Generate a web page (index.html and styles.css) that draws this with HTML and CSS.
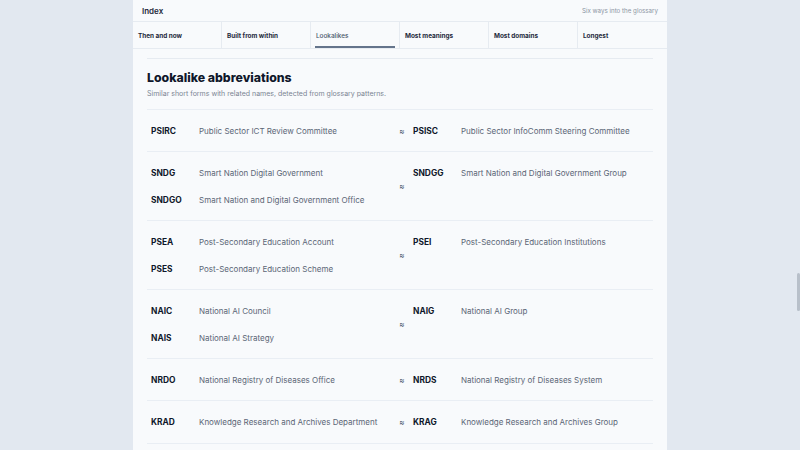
FILE: index.html
```html
<!DOCTYPE html>
<html lang="en">
<head>
<meta charset="utf-8">
<title>Index</title>
<link rel="stylesheet" href="styles.css">
</head>
<body>
<div class="page">
  <header class="top">
    <span class="top-title">Index</span>
    <span class="top-note">Six ways into the glossary</span>
  </header>
  <nav class="tabs">
    <div class="tab">Then and now</div>
    <div class="tab">Built from within</div>
    <div class="tab active">Lookalikes</div>
    <div class="tab">Most meanings</div>
    <div class="tab">Most domains</div>
    <div class="tab">Longest</div>
  </nav>
  <main class="content">
    <section class="section">
      <h1 class="title">Lookalike abbreviations</h1>
      <p class="sub">Similar short forms with related names, detected from glossary patterns.</p>
      <div class="rows">
        <div class="row">
          <div class="group">
            <div class="entry"><b class="abbr">PSIRC</b><span class="name">Public Sector ICT Review Committee</span></div>
          </div>
          <div class="approx">≈</div>
          <div class="group">
            <div class="entry"><b class="abbr">PSISC</b><span class="name">Public Sector InfoComm Steering Committee</span></div>
          </div>
        </div>
        <div class="row">
          <div class="group">
            <div class="entry"><b class="abbr">SNDG</b><span class="name">Smart Nation Digital Government</span></div>
            <div class="entry"><b class="abbr">SNDGO</b><span class="name">Smart Nation and Digital Government Office</span></div>
          </div>
          <div class="approx">≈</div>
          <div class="group">
            <div class="entry"><b class="abbr">SNDGG</b><span class="name">Smart Nation and Digital Government Group</span></div>
          </div>
        </div>
        <div class="row">
          <div class="group">
            <div class="entry"><b class="abbr">PSEA</b><span class="name">Post-Secondary Education Account</span></div>
            <div class="entry"><b class="abbr">PSES</b><span class="name">Post-Secondary Education Scheme</span></div>
          </div>
          <div class="approx">≈</div>
          <div class="group">
            <div class="entry"><b class="abbr">PSEI</b><span class="name">Post-Secondary Education Institutions</span></div>
          </div>
        </div>
        <div class="row">
          <div class="group">
            <div class="entry"><b class="abbr">NAIC</b><span class="name">National AI Council</span></div>
            <div class="entry"><b class="abbr">NAIS</b><span class="name">National AI Strategy</span></div>
          </div>
          <div class="approx">≈</div>
          <div class="group">
            <div class="entry"><b class="abbr">NAIG</b><span class="name">National AI Group</span></div>
          </div>
        </div>
        <div class="row">
          <div class="group">
            <div class="entry"><b class="abbr">NRDO</b><span class="name">National Registry of Diseases Office</span></div>
          </div>
          <div class="approx">≈</div>
          <div class="group">
            <div class="entry"><b class="abbr">NRDS</b><span class="name">National Registry of Diseases System</span></div>
          </div>
        </div>
        <div class="row">
          <div class="group">
            <div class="entry"><b class="abbr">KRAD</b><span class="name">Knowledge Research and Archives Department</span></div>
          </div>
          <div class="approx">≈</div>
          <div class="group">
            <div class="entry"><b class="abbr">KRAG</b><span class="name">Knowledge Research and Archives Group</span></div>
          </div>
        </div>
      </div>
    </section>
  </main>
</div>
<div class="scroll-thumb"></div>
</body>
</html>
```
FILE: styles.css
```css
* { box-sizing: border-box; }
html, body { margin: 0; padding: 0; }
body {
  background: #e2e8f0;
  font-family: Inter, "Noto Sans", sans-serif;
  color: #0f172a;
  height: 450px;
  overflow: hidden;
}
.page {
  width: 534px;
  margin: 0 0 0 133px;
  background: #f8fafc;
  min-height: 450px;
}
.top {
  height: 22px;
  display: flex;
  align-items: center;
  justify-content: space-between;
  padding: 0 9px 0 9px;
  border-bottom: 1px solid #e6ebf1;
}
.top-title { font-size: 8px; font-weight: 600; color: #1e293b; }
.top-note { font-size: 6.2px; color: #8b95a3; }
.tabs {
  display: grid;
  grid-template-columns: repeat(6, 1fr);
  height: 27px;
  border-bottom: 1px solid #e6ebf1;
}
.tab {
  display: flex;
  align-items: center;
  padding: 1px 5px 0;
  font-size: 6.4px;
  font-weight: 700;
  color: #1e293b;
  border-right: 1px solid #e6ebf1;
  position: relative;
}
.tab:last-child { border-right: none; }
.tab.active { font-weight: 500; color: #475569; }
.tab.active::after {
  content: "";
  position: absolute;
  left: 4px;
  right: 4px;
  bottom: 0;
  height: 2px;
  background: #64748b;
}
.content { padding: 9px 14px 0 14px; }
.section { border-top: 1px solid #e6ebf1; padding-top: 10px; }
.title {
  margin: 0;
  font-size: 12.3px;
  font-weight: 800;
  color: #0f172a;
  line-height: 18px;
}
.sub {
  margin: 2px 0 0;
  font-size: 7px;
  color: #7b8593;
  line-height: 10px;
}
.rows { margin-top: 9.6px; border-top: 1px solid #e9eef4; }
.row {
  display: grid;
  grid-template-columns: 246px 16px 1fr;
  align-items: center;
  padding: 15px 0 14.4px 4px;
  border-bottom: 1px solid #e9eef4;
}
.group {
  display: flex;
  flex-direction: column;
  gap: 14.6px;
  align-self: start;
}
.entry {
  display: flex;
  align-items: center;
  height: 12px;
}
.abbr { width: 48px; font-size: 8.4px; font-weight: 700; color: #0f172a; }
.name { font-size: 8px; color: #5b6676; }
.approx {
  font-size: 8px;
  color: #475569;
  text-align: center;
  padding-right: 6px;
}
.scroll-thumb {
  position: fixed;
  right: 0;
  top: 273px;
  width: 3px;
  height: 38px;
  background: #b8c0ca;
  border-radius: 2px;
}
```
